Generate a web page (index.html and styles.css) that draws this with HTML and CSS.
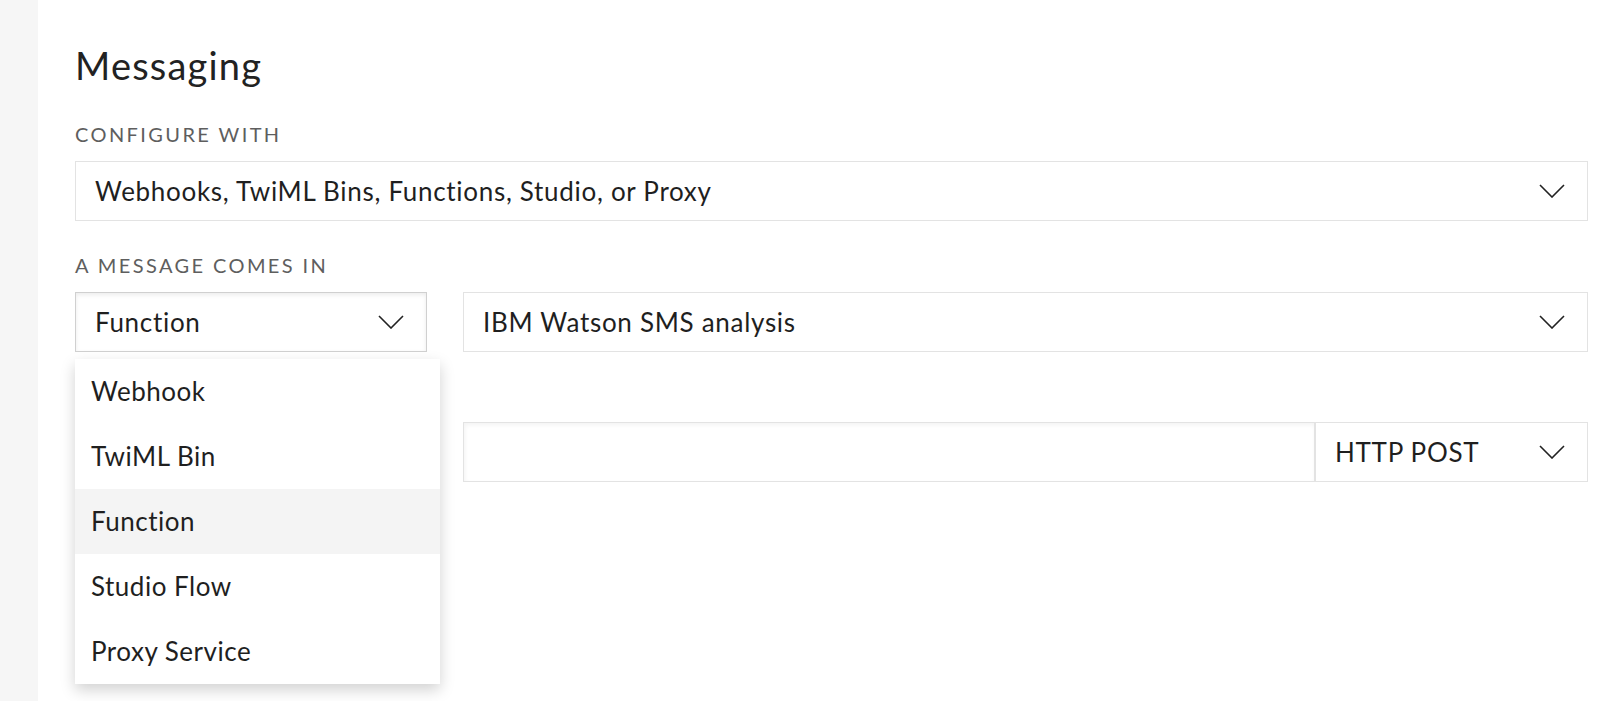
FILE: index.html
```html
<!DOCTYPE html>
<html>
<head>
    <link rel="stylesheet" href="styles.css">
</head>
<body>
    <div class="page">
        <div class="sidebar"></div>

        <div class="content">
            <h1 class="title">Messaging</h1>

            <div class="field-label">Configure with</div>
            <div class="select">
                <span>Webhooks, TwiML Bins, Functions, Studio, or Proxy</span>
                <svg class="chevron" viewBox="0 0 26 14"><polyline points="1,1 13,13 25,1"/></svg>
            </div>

            <div class="field-label label-gap">A message comes in</div>
            <div class="row">
                <div class="picker">
                    <div class="select select-open">
                        <span>Function</span>
                        <svg class="chevron" viewBox="0 0 26 14"><polyline points="1,1 13,13 25,1"/></svg>
                    </div>
                    <ul class="menu">
                        <li>Webhook</li>
                        <li>TwiML Bin</li>
                        <li class="active">Function</li>
                        <li>Studio Flow</li>
                        <li>Proxy Service</li>
                    </ul>
                </div>
                <div class="select">
                    <span>IBM Watson SMS analysis</span>
                    <svg class="chevron" viewBox="0 0 26 14"><polyline points="1,1 13,13 25,1"/></svg>
                </div>
            </div>

            <div class="row row-url">
                <div></div>
                <div class="url-group">
                    <div class="url-input"></div>
                    <div class="select method">
                        <span>HTTP POST</span>
                        <svg class="chevron" viewBox="0 0 26 14"><polyline points="1,1 13,13 25,1"/></svg>
                    </div>
                </div>
            </div>
        </div>
    </div>
</body>
</html>
```

FILE: styles.css
```css
body {
    margin: 0;
    font-family: "Lato", "Liberation Sans", sans-serif;
    color: #1f1f1f;
    background-color: white;
}

.page {
    display: flex;
    min-height: 701px;
}

.sidebar {
    width: 38px;
    background-color: #f6f6f6;
    flex-shrink: 0;
}

.content {
    flex: 1;
    padding: 43px 12px 0 37px;
}

.title {
    margin: 0;
    font-size: 38px;
    line-height: 44px;
    font-weight: 400;
    letter-spacing: 1.2px;
    color: #222;
}

.field-label {
    margin: 35px 0 15px;
    font-size: 20px;
    line-height: 24px;
    letter-spacing: 2.4px;
    text-transform: uppercase;
    color: #5e5e5e;
}

.label-gap {
    margin-top: 32px;
    margin-bottom: 15px;
}

.select {
    height: 60px;
    box-sizing: border-box;
    border: 1px solid #e3e3e3;
    background-color: white;
    display: flex;
    align-items: center;
    justify-content: space-between;
    padding: 0 22px 0 19px;
    font-size: 26px;
    letter-spacing: 0.7px;
}

.select-open {
    border-color: #d0d0d0;
    box-shadow: inset 0 2px 4px rgba(0,0,0,0.08);
}

.chevron {
    width: 26px;
    height: 14px;
    fill: none;
    stroke: #222;
    stroke-width: 1.6;
    flex-shrink: 0;
}

.row {
    display: grid;
    grid-template-columns: 352px 1fr;
    gap: 36px;
}

.row-url {
    margin-top: 70px;
}

.picker {
    position: relative;
}

.menu {
    position: absolute;
    top: 67px;
    left: 0;
    width: 365px;
    margin: 0;
    padding: 0;
    list-style: none;
    background-color: white;
    box-shadow: 0 6px 14px rgba(0,0,0,0.18);
    z-index: 2;
}

.menu li {
    height: 65px;
    line-height: 65px;
    padding-left: 16px;
    font-size: 26px;
    letter-spacing: 0.5px;
    color: #1f1f1f;
}

.menu li.active {
    background-color: #f4f4f4;
}

.url-group {
    display: flex;
}

.url-input {
    flex: 1;
    height: 60px;
    box-sizing: border-box;
    border: 1px solid #e3e3e3;
    border-right: 2px solid #e3e3e3;
    box-shadow: inset 1px 2px 4px rgba(0,0,0,0.05);
}

.method {
    width: 272px;
    border-left: none;
}
```
